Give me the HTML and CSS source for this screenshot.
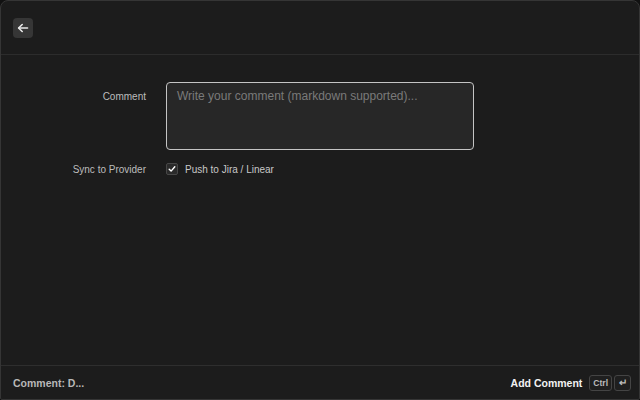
FILE: index.html
```html
<!DOCTYPE html>
<html lang="en">
<head>
  <meta charset="UTF-8">
  <meta name="viewport" content="width=device-width, initial-scale=1.0">
  <title>Add Comment</title>
  <link rel="stylesheet" href="styles.css">
</head>
<body>
  <div class="panel">
    <header class="panel-header">
      <button class="back-btn" aria-label="Back">
        <svg width="12" height="12" viewBox="0 0 12 12" fill="none" stroke="#e8e8e8" stroke-width="1.6" stroke-linecap="round" stroke-linejoin="round">
          <path d="M10.5 6H1.8"/>
          <path d="M5.2 2.5 1.6 6l3.6 3.5"/>
        </svg>
      </button>
    </header>

    <main class="panel-body">
      <div class="form-row">
        <label class="form-label" for="comment">Comment</label>
        <textarea id="comment" class="comment-input" placeholder="Write your comment (markdown supported)..."></textarea>
      </div>
      <div class="form-row form-row-center">
        <span class="form-label">Sync to Provider</span>
        <label class="check">
          <span class="check-box">
            <svg width="8" height="8" viewBox="0 0 8 8" fill="none" stroke="#fff" stroke-width="1.4" stroke-linecap="round" stroke-linejoin="round">
              <path d="M1.2 4.2 3.1 6.1 6.8 1.8"/>
            </svg>
          </span>
          Push to Jira / Linear
        </label>
      </div>
    </main>

    <footer class="panel-footer">
      <span class="footer-title">Comment: D...</span>
      <div class="footer-actions">
        <span class="submit">Add Comment</span>
        <kbd class="key">Ctrl</kbd>
        <kbd class="key key-enter">&#8629;</kbd>
      </div>
    </footer>
  </div>
</body>
</html>
```

FILE: styles.css
```css
html, body {
  margin: 0;
  height: 100%;
  background: #111;
}
body {
  font-family: 'Liberation Sans', Arial, sans-serif;
  color: #ccc;
}
.panel {
  box-sizing: border-box;
  height: 400px;
  display: flex;
  flex-direction: column;
  background: #1c1c1c;
  border: 1px solid #353535;
  border-radius: 8px 8px 2px 2px;
  overflow: hidden;
}
.panel-header {
  height: 54px;
  box-sizing: border-box;
  padding: 17px 12px 0;
  border-bottom: 1px solid #2c2c2c;
}
.back-btn {
  width: 20px;
  height: 20px;
  padding: 0;
  border: none;
  border-radius: 4px;
  background: #363636;
  display: flex;
  align-items: center;
  justify-content: center;
  cursor: pointer;
}
.panel-body {
  flex: 1;
  padding: 27px 0 0;
}
.form-row {
  display: flex;
  align-items: flex-start;
  margin-bottom: 13px;
}
.form-row-center {
  align-items: center;
}
.form-label {
  width: 145px;
  padding-right: 20px;
  box-sizing: content-box;
  text-align: right;
  font-size: 10px;
  color: #bdbdbd;
}
.form-row:first-child .form-label {
  padding-top: 9px;
}
.comment-input {
  width: 308px;
  height: 68px;
  box-sizing: border-box;
  padding: 6px 10px;
  background: #272727;
  border: 1px solid #c4c4c4;
  border-radius: 4px;
  color: #ddd;
  font-family: inherit;
  font-size: 12px;
  resize: none;
  outline: none;
}
.comment-input::placeholder {
  color: #7a7a7a;
}
.check {
  display: flex;
  align-items: center;
  gap: 7px;
  font-size: 10px;
  color: #c8c8c8;
}
.check-box {
  width: 12px;
  height: 12px;
  box-sizing: border-box;
  border: 1px solid #474747;
  border-radius: 2px;
  background: #2a2a2a;
  display: flex;
  align-items: center;
  justify-content: center;
}
.panel-footer {
  height: 33px;
  border-top: 1px solid #2e2e2e;
  display: flex;
  align-items: center;
  justify-content: space-between;
  padding: 0 8px 0 12px;
}
.footer-title {
  font-size: 10.5px;
  font-weight: bold;
  color: #b8b8b8;
}
.footer-actions {
  display: flex;
  align-items: center;
  gap: 2px;
}
.submit {
  font-size: 10.5px;
  font-weight: bold;
  color: #f2f2f2;
  margin-right: 5px;
}
.key {
  height: 16px;
  min-width: 17px;
  box-sizing: border-box;
  padding: 0 3px;
  border: 1px solid #444;
  border-radius: 3px;
  background: #1f1f1f;
  font-family: inherit;
  font-size: 8.5px;
  font-weight: bold;
  color: #bbb;
  display: flex;
  align-items: center;
  justify-content: center;
}
.key-enter {
  font-size: 10px;
}
```
